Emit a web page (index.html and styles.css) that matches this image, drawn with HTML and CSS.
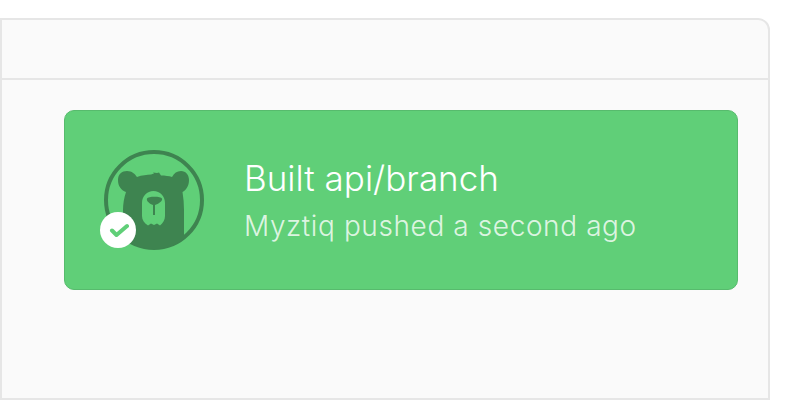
FILE: index.html
```html
<!DOCTYPE html>
<html lang="en">
<head>
<meta charset="utf-8">
<title>Build status</title>
<link rel="stylesheet" href="styles.css">
</head>
<body>
<div class="panel">
  <div class="panel-head"></div>
  <div class="panel-body">
    <div class="status-card">
      <div class="avatar">
        <svg class="bear" width="100" height="100" viewBox="0 0 100 100" aria-hidden="true">
          <defs><clipPath id="ring"><circle cx="50" cy="50" r="49"/></clipPath></defs>
          <circle cx="50" cy="50" r="48" fill="none" stroke="#3e8450" stroke-width="4"/>
          <g clip-path="url(#ring)">
            <path fill="#3e8450" d="M19 100 L19 60 C19 54 20 48 22 42 C17 40 14 36 14 30 C14 24 18 21 23 21 C28 21 31 24 33 27 C38 25 43 25 47 24.5 L50 23.5 L49 22.5 L53 23 L55 22.5 L57 25.5 C61 25.5 65 26 68 27 C70 23 73 21 77 21 C82 21 85 25 85 30 C85 36 82 40 78.5 42 C79.5 48 80 54 80 60 L80 100 Z"/>
          </g>
          <path fill="#60cf78" d="M49.5 41 C56 41 61 46 61 53 C61 59 61 62 61 66 C61 70 59 73 56 75.5 L53 73.5 L50 75 L47 73.5 L44 75.5 C40 73 38 70 38 66 C38 62 38 59 38 53 C38 46 43 41 49.5 41 Z"/>
          <path fill="#3e8450" d="M43 48.5 C44 46 57 46 58 48.5 C59 51 54 54 51 55 L51 65 L49 65 L49 55 C46 54 42 51 43 48.5 Z"/>
        </svg>
        <span class="badge">
          <svg width="22" height="16" viewBox="0 0 22 16" aria-hidden="true">
            <path d="M5 8.5 L9.5 13 L20 4" fill="none" stroke="#60cf78" stroke-width="4" stroke-linecap="round" stroke-linejoin="round"/>
          </svg>
        </span>
      </div>
      <div class="status-text">
        <div class="status-title">Built api/branch</div>
        <div class="status-sub">Myztiq pushed a second ago</div>
      </div>
    </div>
  </div>
</div>
</body>
</html>
```
FILE: styles.css
```css
* { box-sizing: border-box; }
html, body { margin: 0; padding: 0; height: 100%; background: #fff; overflow: hidden; }
body { padding-top: 18px; font-family: Inter, "Liberation Sans", sans-serif; }
.panel {
  width: 770px;
  height: 382px;
  background: #fafafa;
  border: 2px solid #e6e6e6;
  border-radius: 0 12px 0 0;
}
.panel-head { height: 60px; border-bottom: 2px solid #e6e6e6; }
.panel-body { padding: 30px 30px 0 62px; }
.status-card {
  display: flex;
  align-items: center;
  height: 180px;
  padding-left: 39px;
  gap: 40px;
  background: #60cf78;
  border: 1px solid #57bb6d;
  border-radius: 10px;
}
.avatar { position: relative; width: 100px; height: 100px; flex: none; }
.bear { display: block; }
.badge {
  position: absolute;
  left: -4px;
  bottom: 2px;
  width: 36px;
  height: 36px;
  border-radius: 50%;
  background: #fff;
  display: flex;
  align-items: center;
  justify-content: center;
}
.status-text { display: flex; flex-direction: column; gap: 12px; padding-bottom: 1px; }
.status-title { font-size: 35px; line-height: 40px; font-weight: 300; color: #fff; }
.status-sub { font-size: 28px; line-height: 32px; font-weight: 300; letter-spacing: .6px; color: rgba(255,255,255,.8); }
```
